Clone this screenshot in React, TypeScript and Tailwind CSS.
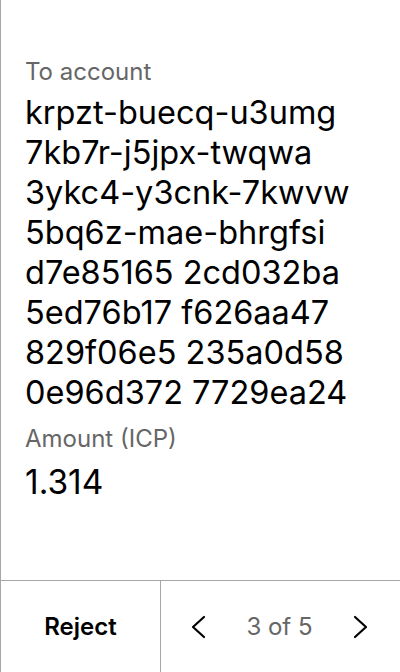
import React from 'react';

const accountLines = [
  "krpzt-buecq-u3umg",
  "7kb7r-j5jpx-twqwa",
  "3ykc4-y3cnk-7kwvw",
  "5bq6z-mae-bhrgfsi",
  "d7e85165 2cd032ba",
  "5ed76b17 f626aa47",
  "829f06e5 235a0d58",
  "0e96d372 7729ea24",
];

function Chevron({ dir }: { dir: 'left' | 'right' }) {
  return (
    <svg width="24" height="24" viewBox="0 0 24 24" fill="none" stroke="currentColor" strokeWidth="2.2" strokeLinecap="round" strokeLinejoin="round">
      {dir === 'left' ? <path d="M17 2 L6 12 L17 22" /> : <path d="M7 2 L18 12 L7 22" />}
    </svg>
  );
}

function App() {
  return (
    <div className="w-[400px] h-[672px] flex flex-col bg-white border-l border-[#a6a6a6] font-['Inter',sans-serif] text-black">
      <div className="flex-1 pl-[24px] pt-[58px]">
        <div className="text-[24px] leading-[28px] text-[#666666]">To account</div>
        <div className="mt-[7px] text-[32.5px] leading-[40px]">
          {accountLines.map((l, i) => (
            <div key={i}>{l}</div>
          ))}
        </div>
        <div className="mt-[12px] text-[24px] leading-[28px] text-[#666666]">Amount (ICP)</div>
        <div className="mt-[9px] text-[33.5px] leading-[40px]">1.314</div>
      </div>
      <div className="h-[92px] flex border-t border-[#a6a6a6]">
        <button className="w-[160px] flex items-center justify-center border-r border-[#a6a6a6] text-[24px] font-semibold">
          Reject
        </button>
        <div className="flex-1 flex items-center pl-[26px] pr-[28px]">
          <Chevron dir="left" />
          <span className="flex-1 text-center text-[24px] text-[#666666]">3 of 5</span>
          <Chevron dir="right" />
        </div>
      </div>
    </div>
  );
}

export default App;
